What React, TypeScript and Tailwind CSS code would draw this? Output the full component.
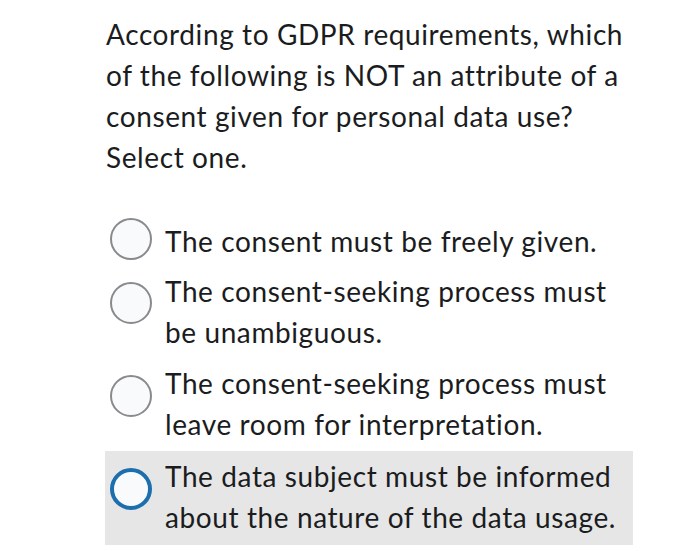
const options = [
  { lines: ['The consent must be freely given.'], shift: 'mb-[4px]', pad: 'pt-1 pb-[1px]', selected: false },
  { lines: ['The consent-seeking process must', 'be unambiguous.'], shift: 'mb-[18px]', pad: 'py-1', selected: false },
  { lines: ['The consent-seeking process must', 'leave room for interpretation.'], shift: 'mb-[16px]', pad: 'py-1', selected: false },
  { lines: ['The data subject must be informed', 'about the nature of the data usage.'], shift: 'mb-[17px]', pad: 'pt-[5px] pb-[7px]', selected: true },
];

export default function App() {
  return (
    <div
      className="min-h-[551px] w-[700px] bg-white text-[#1b1c1e]"
      style={{ fontFamily: 'Lato, "Open Sans", sans-serif' }}
    >
      <div className="pl-[105px] pt-[14px] w-[633px]">
        {/* Question */}
        <p className="text-[28px] leading-[41px] tracking-[0.6px] pl-px">
          According to GDPR requirements, which
          <br />
          of the following is NOT an attribute of a
          <br />
          consent given for personal data use?
          <br />
          Select one.
        </p>

        {/* Options */}
        <div className="mt-[36px] flex flex-col gap-[2px]">
          {options.map((opt, i) => (
            <div
              key={i}
              className={`flex items-center pl-[5px] ${opt.pad} ${opt.selected ? 'bg-[#e6e6e6]' : ''}`}
            >
              <span
                className={`shrink-0 w-[42px] h-[42px] rounded-full bg-[#f9fafc] ${opt.shift} ${
                  opt.selected ? 'border-[4px] border-[#1c6fae]' : 'border-2 border-[#8a8a8e]'
                }`}
              />
              <div className="ml-[13px] text-[28px] leading-[41px] tracking-[0.6px]">
                {opt.lines.map((l, j) => (
                  <div key={j} className="whitespace-nowrap">
                    {l}
                  </div>
                ))}
              </div>
            </div>
          ))}
        </div>
      </div>
    </div>
  );
}
